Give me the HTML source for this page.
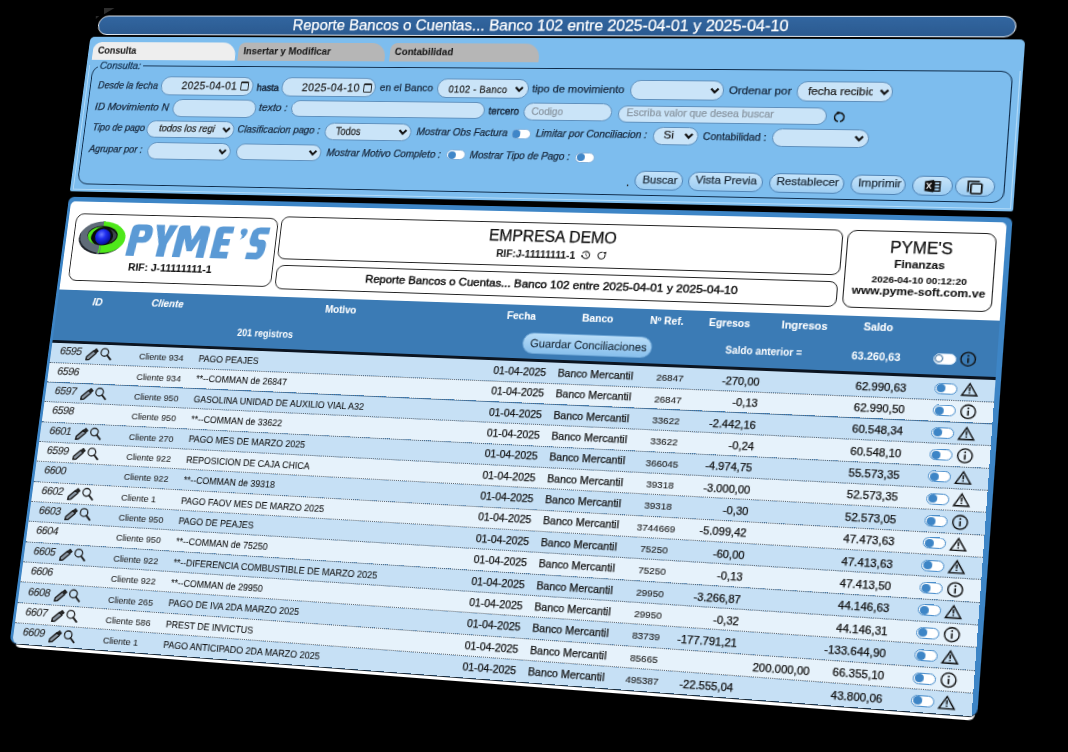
<!DOCTYPE html>
<html><head><meta charset="utf-8"><style>
html,body{margin:0;padding:0;background:#000;width:1068px;height:752px;overflow:hidden}
#page{position:absolute;left:0;top:0;width:1000px;height:720px;transform-origin:0 0;transform:matrix3d(0.8627905428,-0.001325382575,0,-0.0001042445195,-0.1226980846,0.8783294804,0,-5.875354911e-05,0,0,1,0,77.2073393,4.990854457,0,1)}
#f{position:absolute;left:20px;top:215px}
.t{position:absolute;white-space:nowrap;font-family:"Liberation Sans",sans-serif;color:#111;-webkit-text-stroke:0.25px currentColor}
.r{position:absolute;box-sizing:border-box}
svg{position:absolute;overflow:visible}
</style></head><body><svg style="position:absolute;left:0;top:0" width="1068" height="60"><path d="M104 8 L114.5 8 L104 14.3 Z" fill="#2e2e2e"/><path d="M95.8 15.9 L99.3 15.9 L95.8 19 Z" fill="#2a2a2a"/></svg><div id="page"><div id="f">
<div class="r" style="left:7.00px;top:-202.80px;width:944.00px;height:21.70px;border:1.7px solid #eef3f8;border-radius:11px;background:linear-gradient(#3266a0,#2b5a90)"></div>
<div class="t" style="top:-202.17px;line-height:19.15px;font-size:15.96px;left:223.90px;color:#fff;">Reporte Bancos o Cuentas... Banco 102 entre 2025-04-01 y 2025-04-10</div>
<div class="r" style="left:0.00px;top:-179.00px;width:960.00px;height:173.30px;background:#7dbdee;border-radius:5px 5px 2px 2px"></div>
<div class="r" style="left:2.50px;top:-147.00px;width:955.00px;height:138.70px;border-bottom:1.5px solid #b3dbf8;border-left:1.3px solid #b3dbf8;border-right:1.3px solid #b3dbf8"></div>
<div class="r" style="left:5.00px;top:-173.30px;width:159.50px;height:19.80px;background:#eeeeee;border-radius:9px 15px 0 0"></div>
<div class="r" style="left:168.00px;top:-173.30px;width:159.00px;height:19.80px;background:#b6b6b6;border-radius:7px 15px 0 0"></div>
<div class="r" style="left:332.00px;top:-173.30px;width:156.00px;height:19.80px;background:#b6b6b6;border-radius:7px 15px 0 0"></div>
<div class="t" style="top:-168.92px;line-height:12.23px;font-size:10.19px;left:10.70px;color:#1a1a1a;font-weight:bold;-webkit-text-stroke:0.08px currentColor">Consulta</div>
<div class="t" style="top:-169.39px;line-height:12.38px;font-size:10.32px;left:173.40px;color:#1a1a1a;font-weight:bold;-webkit-text-stroke:0.08px currentColor">Insertar y Modificar</div>
<div class="t" style="top:-169.50px;line-height:12.21px;font-size:10.17px;left:337.10px;color:#1a1a1a;font-weight:bold;-webkit-text-stroke:0.08px currentColor">Contabilidad</div>
<div class="r" style="left:7.00px;top:-147.50px;width:943.50px;height:133.50px;border:1.2px solid #0e2a48;border-radius:11px"></div>
<div class="r" style="left:13.00px;top:-150.00px;width:51.00px;height:6.00px;background:#7dbdee"></div>
<div class="t" style="top:-153.17px;line-height:13.15px;font-size:10.96px;left:15.20px;color:#12304f;font-style:italic">Consulta:</div>
<div class="t" style="top:-130.07px;line-height:12.14px;font-size:10.12px;left:16.10px;color:#16263a;font-style:italic">Desde la fecha</div>
<div class="r" style="left:87.20px;top:-134.60px;width:101.80px;height:20.30px;background:#cae4f8;border:1px solid #5f90bd;border-radius:10px"></div>
<div class="t" style="top:-131.81px;line-height:14.43px;font-size:12.02px;left:109.70px;color:#222;letter-spacing:0.04em;transform:scaleX(0.9259);transform-origin:0 50%">2025-04-01</div>
<div class="r" style="left:192.70px;top:-192.00px;width:24.00px;height:0.00px;"></div>
<div class="t" style="top:-129.24px;line-height:12.48px;font-size:10.40px;left:192.70px;color:#16263a;-webkit-text-stroke:0.5px #16263a;transform:scaleX(0.9434);transform-origin:0 50%">hasta</div>
<div class="r" style="left:220.10px;top:-135.00px;width:101.10px;height:21.10px;background:#cae4f8;border:1px solid #5f90bd;border-radius:10px"></div>
<div class="t" style="top:-131.12px;line-height:14.64px;font-size:12.20px;left:242.10px;color:#222;letter-spacing:0.04em;transform:scaleX(0.9259);transform-origin:0 50%">2025-04-10</div>
<div class="t" style="top:-130.66px;line-height:12.72px;font-size:10.60px;left:325.60px;color:#16263a;">en el Banco</div>
<div class="r" style="left:385.50px;top:-135.40px;width:95.60px;height:21.60px;background:#cae4f8;border:1px solid #5f90bd;border-radius:10px"></div>
<div class="t" style="top:-130.41px;line-height:12.81px;font-size:10.67px;left:397.70px;color:#222;letter-spacing:0.03em;transform:scaleX(0.9091);transform-origin:0 50%">0102 - Banco</div>
<div class="t" style="top:-131.02px;line-height:13.44px;font-size:11.20px;left:484.40px;color:#16263a;">tipo de movimiento</div>
<div class="r" style="left:584.30px;top:-135.00px;width:92.70px;height:21.00px;background:#cae4f8;border:1px solid #5f90bd;border-radius:10px"></div>
<div class="t" style="top:-131.18px;line-height:13.55px;font-size:11.30px;left:682.00px;color:#16263a;">Ordenar por</div>
<div class="r" style="left:747.80px;top:-135.00px;width:92.30px;height:21.00px;background:#cae4f8;border:1px solid #5f90bd;border-radius:10px"></div>
<div class="r" style="left:755.00px;top:-134.00px;width:65.50px;height:20.00px;overflow:hidden"><div class="t" style="left:3.9px;top:3.4px;font-size:11.3px;line-height:13px;color:#222">fecha recibida</div></div>
<div class="t" style="top:-107.25px;line-height:13.49px;font-size:11.24px;left:15.80px;color:#16263a;font-style:italic">ID Movimiento N</div>
<div class="r" style="left:102.90px;top:-109.70px;width:92.30px;height:19.20px;background:#cae4f8;border:1px solid #5f90bd;border-radius:10px"></div>
<div class="t" style="top:-108.00px;line-height:13.61px;font-size:11.34px;left:198.10px;color:#16263a;font-style:italic">texto :</div>
<div class="r" style="left:232.90px;top:-109.80px;width:205.20px;height:17.80px;background:#cae4f8;border:1px solid #5f90bd;border-radius:10px"></div>
<div class="t" style="top:-107.48px;line-height:13.56px;font-size:11.30px;left:441.90px;color:#16263a;-webkit-text-stroke:0.45px #16263a;transform:scaleX(0.8929);transform-origin:0 50%">tercero</div>
<div class="r" style="left:478.40px;top:-110.00px;width:89.90px;height:19.00px;background:#cae4f8;border:1px solid #5f90bd;border-radius:10px"></div>
<div class="t" style="top:-105.88px;line-height:12.16px;font-size:10.13px;left:486.30px;color:#8a97a3;">Codigo</div>
<div class="r" style="left:574.20px;top:-108.40px;width:205.20px;height:18.30px;background:#cae4f8;border:1px solid #5f90bd;border-radius:10px"></div>
<div class="t" style="top:-106.12px;line-height:12.45px;font-size:10.37px;left:582.60px;color:#8a97a3;">Escriba valor que desea buscar</div>
<div class="t" style="top:-82.58px;line-height:12.15px;font-size:10.12px;left:16.20px;color:#16263a;font-style:italic">Tipo de pago</div>
<div class="r" style="left:77.40px;top:-85.70px;width:96.50px;height:18.40px;background:#cae4f8;border:1px solid #5f90bd;border-radius:10px"></div>
<div class="t" style="top:-82.52px;line-height:12.43px;font-size:10.36px;left:90.90px;color:#222;font-style:italic">todos los regi</div>
<div class="t" style="top:-83.37px;line-height:12.34px;font-size:10.29px;left:177.60px;color:#16263a;font-style:italic">Clasificacion pago :</div>
<div class="r" style="left:272.30px;top:-86.50px;width:91.70px;height:19.00px;background:#cae4f8;border:1px solid #5f90bd;border-radius:10px"></div>
<div class="t" style="top:-83.89px;line-height:14.19px;font-size:11.83px;left:283.50px;color:#222;transform:scaleX(0.8333);transform-origin:0 50%">Todos</div>
<div class="t" style="top:-82.88px;line-height:12.35px;font-size:10.30px;left:369.50px;color:#16263a;font-style:italic">Mostrar Obs Factura</div>
<div class="t" style="top:-83.06px;line-height:12.31px;font-size:10.26px;left:492.90px;color:#16263a;font-style:italic">Limitar por Conciliacion :</div>
<div class="r" style="left:611.10px;top:-86.00px;width:44.50px;height:18.50px;background:#cae4f8;border:1px solid #5f90bd;border-radius:10px"></div>
<div class="t" style="top:-83.70px;line-height:13.80px;font-size:11.50px;left:621.50px;color:#222;">Si</div>
<div class="t" style="top:-82.48px;line-height:12.17px;font-size:10.14px;left:660.60px;color:#16263a;">Contabilidad :</div>
<div class="r" style="left:728.00px;top:-86.00px;width:92.90px;height:18.50px;background:#cae4f8;border:1px solid #5f90bd;border-radius:10px"></div>
<div class="t" style="top:-59.27px;line-height:12.34px;font-size:10.28px;left:15.40px;color:#16263a;font-style:italic">Agrupar por :</div>
<div class="r" style="left:81.20px;top:-62.00px;width:92.10px;height:18.50px;background:#cae4f8;border:1px solid #5f90bd;border-radius:10px"></div>
<div class="r" style="left:179.40px;top:-62.50px;width:91.80px;height:18.50px;background:#cae4f8;border:1px solid #5f90bd;border-radius:10px"></div>
<div class="t" style="top:-59.17px;line-height:12.35px;font-size:10.29px;left:276.80px;color:#16263a;font-style:italic">Mostrar Motivo Completo :</div>
<div class="t" style="top:-58.75px;line-height:12.10px;font-size:10.09px;left:427.50px;color:#16263a;font-style:italic">Mostrar Tipo de Pago :</div>
<div class="r" style="left:467.60px;top:-82.00px;width:20.00px;height:11.00px;background:#fff;border:1px solid #7fb0dc;border-radius:6px"></div>
<div class="r" style="left:469.20px;top:-80.60px;width:8.20px;height:8.20px;background:#3f86c8;border-radius:50%"></div>
<div class="r" style="left:403.30px;top:-58.60px;width:20.00px;height:11.00px;background:#fff;border:1px solid #7fb0dc;border-radius:6px"></div>
<div class="r" style="left:404.90px;top:-57.20px;width:8.20px;height:8.20px;background:#3f86c8;border-radius:50%"></div>
<div class="r" style="left:535.10px;top:-58.30px;width:20.00px;height:11.00px;background:#fff;border:1px solid #7fb0dc;border-radius:6px"></div>
<div class="r" style="left:536.70px;top:-56.90px;width:8.20px;height:8.20px;background:#3f86c8;border-radius:50%"></div>
<svg style="left:0.00px;top:0.00px" width="1" height="1"><path d="M467.60 -126.28 L471.20 -122.32 L474.80 -126.28" fill="none" stroke="#111" stroke-width="2.1"/></svg>
<svg style="left:0.00px;top:0.00px" width="1" height="1"><path d="M664.40 -126.48 L668.00 -122.52 L671.60 -126.48" fill="none" stroke="#111" stroke-width="2.1"/></svg>
<svg style="left:0.00px;top:0.00px" width="1" height="1"><path d="M828.40 -126.48 L832.00 -122.52 L835.60 -126.48" fill="none" stroke="#111" stroke-width="2.1"/></svg>
<svg style="left:0.00px;top:0.00px" width="1" height="1"><path d="M161.70 -78.78 L165.30 -74.82 L168.90 -78.78" fill="none" stroke="#111" stroke-width="2.1"/></svg>
<svg style="left:0.00px;top:0.00px" width="1" height="1"><path d="M351.40 -78.98 L355.00 -75.02 L358.60 -78.98" fill="none" stroke="#111" stroke-width="2.1"/></svg>
<svg style="left:0.00px;top:0.00px" width="1" height="1"><path d="M642.90 -78.98 L646.50 -75.02 L650.10 -78.98" fill="none" stroke="#111" stroke-width="2.1"/></svg>
<svg style="left:0.00px;top:0.00px" width="1" height="1"><path d="M807.90 -78.78 L811.50 -74.82 L815.10 -78.78" fill="none" stroke="#111" stroke-width="2.1"/></svg>
<svg style="left:0.00px;top:0.00px" width="1" height="1"><path d="M160.40 -54.78 L164.00 -50.82 L167.60 -54.78" fill="none" stroke="#111" stroke-width="2.1"/></svg>
<svg style="left:0.00px;top:0.00px" width="1" height="1"><path d="M258.40 -55.18 L262.00 -51.22 L265.60 -55.18" fill="none" stroke="#111" stroke-width="2.1"/></svg>
<div class="r" style="left:174.70px;top:-129.80px;width:9.20px;height:10.00px;border:1.4px solid #222;border-top-width:2.6px;border-radius:1.5px"></div>
<div class="r" style="left:307.70px;top:-129.10px;width:9.20px;height:10.00px;border:1.4px solid #222;border-top-width:2.6px;border-radius:1.5px"></div>
<svg style="left:0;top:0" width="1" height="1"><path d="M790.1 -93.6 A4.6 4.6 0 1 1 791.9 -93.6" fill="none" stroke="#111" stroke-width="1.45"/><circle cx="789.5" cy="-102.6" r="1.45" fill="#111"/></svg>
<div class="t" style="top:-34.10px;line-height:13.20px;font-size:11.00px;left:589.00px;color:#222;">.</div>
<div class="r" style="left:597.10px;top:-40.30px;width:48.20px;height:20.30px;background:linear-gradient(#c6e4fa,#9dcdf2);border:1px solid #5084b6;border-radius:10px"></div>
<div class="t" style="top:-37.25px;line-height:13.30px;font-size:11.08px;left:604.90px;color:#1d2c3a;">Buscar</div>
<div class="r" style="left:650.40px;top:-40.30px;width:72.60px;height:20.30px;background:linear-gradient(#c6e4fa,#9dcdf2);border:1px solid #5084b6;border-radius:10px"></div>
<div class="t" style="top:-37.56px;line-height:13.52px;font-size:11.26px;left:657.20px;color:#1d2c3a;">Vista Previa</div>
<div class="r" style="left:728.80px;top:-40.30px;width:72.70px;height:20.30px;background:linear-gradient(#c6e4fa,#9dcdf2);border:1px solid #5084b6;border-radius:10px"></div>
<div class="t" style="top:-37.73px;line-height:13.45px;font-size:11.21px;left:736.00px;color:#1d2c3a;">Restablecer</div>
<div class="r" style="left:806.60px;top:-40.30px;width:52.90px;height:20.30px;background:linear-gradient(#c6e4fa,#9dcdf2);border:1px solid #5084b6;border-radius:10px"></div>
<div class="t" style="top:-38.02px;line-height:13.63px;font-size:11.36px;left:813.90px;color:#1d2c3a;">Imprimir</div>
<div class="r" style="left:864.60px;top:-40.30px;width:38.40px;height:20.30px;background:linear-gradient(#c6e4fa,#9dcdf2);border:1px solid #5084b6;border-radius:10px"></div>
<div class="r" style="left:904.70px;top:-40.30px;width:37.30px;height:20.30px;background:linear-gradient(#c6e4fa,#9dcdf2);border:1px solid #5084b6;border-radius:10px"></div>
<svg style="left:0;top:0" width="1" height="1">
<path d="M876.8 -34.6 L885.2 -36 L885.2 -23.4 L876.8 -24.8 Z" fill="#111"/>
<path d="M878.6 -33 L882.8 -27 M882.8 -33 L878.6 -27" stroke="#fff" stroke-width="1.2"/>
<rect x="885.6" y="-34.2" width="5.4" height="9.4" fill="none" stroke="#111" stroke-width="1.3"/>
<path d="M885.6 -31.1 H891 M885.6 -28 H891" stroke="#111" stroke-width="1.1"/>
<path d="M917.2 -24.5 V-35.2 H927.6" fill="none" stroke="#111" stroke-width="1.5"/>
<rect x="919.8" y="-32.8" width="10" height="9.8" fill="#c4e2f7" stroke="#111" stroke-width="1.6" rx="1"/>
</svg>
<div class="r" style="left:6.00px;top:478.00px;width:952.00px;height:6.20px;background:#fff;border-radius:0 0 8px 8px"></div>
<div class="r" style="left:0.00px;top:0.00px;width:960.00px;height:481.30px;background:#3d85c6;border-radius:6px 6px 8px 8px;border-bottom:1.3px solid #1b2630"></div>
<div class="r" style="left:3.00px;top:4.80px;width:952.00px;height:97.20px;background:#fff;border-radius:5px 5px 0 0"></div>
<div class="r" style="left:11.00px;top:18.00px;width:222.50px;height:74.00px;border:1px solid #222;border-radius:9px;background:#fff"></div>
<svg style="left:0;top:0" width="1" height="1">
<defs><radialGradient id="ball" cx="0.4" cy="0.35" r="0.7"><stop offset="0" stop-color="#6f7dff"/><stop offset="0.4" stop-color="#1f2ef0"/><stop offset="1" stop-color="#000890"/></radialGradient></defs>
<ellipse cx="42.2" cy="45.2" rx="25" ry="17" fill="#1d2229"/>
<clipPath id="lh"><rect x="0" y="0" width="43" height="80"/></clipPath>
<clipPath id="rh"><rect x="43" y="0" width="60" height="80"/></clipPath>
<ellipse cx="43.8" cy="43.6" rx="25.3" ry="17.2" fill="#5f6b78" clip-path="url(#lh)"/>
<path d="M42.5 26 L44.5 26 L41.5 62 L39 62 Z" fill="#5f6b78"/>
<ellipse cx="43.8" cy="43.6" rx="25.3" ry="17.2" fill="#4fe81a" clip-path="url(#rh)"/>
<path d="M43.5 26.3 L45 26.3 L42 61 L40.5 61 Z" fill="#4fe81a"/>
<ellipse cx="43.3" cy="41.8" rx="16.8" ry="10.6" fill="#0a0d0a"/>
<path d="M44 32 C34 32 27 37 27 42 C27 47 31 50 36 51.5 C31 48 30 45 31 42 C32 37 37 33 44 32 Z" fill="#4fe81a"/>
<path d="M50 34 C56 36 59 39 59 42 C59 45 56 48 51 50 C54 47 55 45 55 42 C55 39 53 36 50 34 Z" fill="#3d464d"/>
<circle cx="43.8" cy="43.2" r="8.6" fill="url(#ball)"/>
</svg>
<svg style="left:0;top:0" width="1" height="1"><g fill="#5b9ad5" fill-rule="evenodd" transform="translate(71.3 28.6) scale(0.345) translate(0 50) skewX(-7.4) translate(0 -50)">
<path d="M6.7 100 V18 Q6.7 0 24.7 0 H50.7 Q75.7 0 75.7 28 Q75.7 58 50.7 58 H33.7 V100 Z M33.7 19 V39 H46.7 Q51.7 39 51.7 29 Q51.7 19 46.7 19 Z"/>
<path d="M81.8 0 H108.8 L116.8 34 L124.8 0 H151.8 L129.8 60 V100 H103.8 V60 Z"/>
<path d="M156 100 V15 Q156 0 171 0 H189 L206 45 L223 0 H241 Q256 0 256 15 V100 H231 V40 L214 80 H198 L181 40 V100 Z"/>
<path d="M275.9 100 V18 Q275.9 0 293.9 0 H329.9 V21 H301.9 V39 H325.9 V59 H301.9 V79 H329.9 V100 Z"/>
<path d="M353 13 Q353 5 363 5 Q374 5 374 15 Q374 30 356 40 Q362 30 360 26 Q353 24 353 13 Z"/>
<path d="M442.3 0 V21 H414.3 Q411.3 21 411.3 25 Q411.3 38 417.3 38 H427.3 Q442.3 40 442.3 62 Q442.3 100 417.3 100 H387.3 V79 H415.3 Q418.3 79 418.3 75 Q418.3 60 412.3 60 H404.3 Q387.3 58 387.3 35 Q387.3 0 412.3 0 Z"/>
</g></svg>
<div class="t" style="top:69.16px;line-height:13.69px;font-size:11.41px;left:76.20px;color:#111;font-weight:bold;-webkit-text-stroke:0.08px currentColor">RIF: J-11111111-1</div>
<div class="r" style="left:236.50px;top:16.30px;width:567.00px;height:45.70px;border:1px solid #222;border-radius:8px"></div>
<div class="r" style="left:237.70px;top:67.60px;width:565.30px;height:26.40px;border:1px solid #222;border-radius:8px"></div>
<div class="r" style="left:808.20px;top:16.00px;width:139.00px;height:78.10px;border:1px solid #222;border-radius:9px"></div>
<div class="t" style="top:21.46px;line-height:19.08px;font-size:15.90px;left:456.00px;color:#111;">EMPRESA DEMO</div>
<div class="t" style="top:44.33px;line-height:12.35px;font-size:10.29px;left:465.20px;color:#222;font-weight:bold;-webkit-text-stroke:0.08px currentColor">RIF:J-11111111-1</div>
<svg style="left:0;top:0" width="1" height="1"><path d="M552.45 47.04 A3.70 3.70 0 1 1 552.23 49.56" fill="none" stroke="#222" stroke-width="1.05"/><circle cx="552.03" cy="49.76" r="1.05" fill="#222"/><path d="M555.8 46.5 V48.8 L557.3 50" fill="none" stroke="#444" stroke-width="0.9"/><path d="M574.78 47.79 A3.50 3.50 0 1 1 572.31 45.32" fill="none" stroke="#222" stroke-width="1.1"/><path d="M572.86 45.25 L576.06 44.65 L575.26 48.15 Z" fill="#222"/></svg>
<div class="t" style="top:73.47px;line-height:14.05px;font-size:11.71px;left:333.10px;color:#111;-webkit-text-stroke:0.45px #111">Reporte Bancos o Cuentas... Banco 102 entre 2025-04-01 y 2025-04-10</div>
<div class="t" style="top:23.49px;line-height:19.01px;font-size:15.84px;left:848.90px;color:#111;">PYME'S</div>
<div class="t" style="top:43.37px;line-height:13.27px;font-size:11.05px;left:853.90px;color:#111;font-weight:bold;-webkit-text-stroke:0.08px currentColor">Finanzas</div>
<div class="t" style="top:59.35px;line-height:11.30px;font-size:9.42px;left:834.00px;color:#111;font-weight:bold;-webkit-text-stroke:0.08px currentColor">2026-04-10 00:12:20</div>
<div class="t" style="top:70.08px;line-height:13.43px;font-size:11.19px;left:816.20px;color:#111;font-weight:bold;-webkit-text-stroke:0.08px currentColor">www.pyme-soft.com.ve</div>
<div class="r" style="left:3.00px;top:102.00px;width:952.00px;height:55.00px;background:#3b7bb5"></div>
<div class="r" style="left:3.00px;top:156.80px;width:952.00px;height:3.00px;background:#0b1420"></div>
<div class="t" style="top:107.64px;line-height:13.32px;font-size:11.10px;left:41.90px;color:#fff;font-weight:bold;font-style:italic;-webkit-text-stroke:0.08px currentColor">ID</div>
<div class="t" style="top:107.48px;line-height:12.63px;font-size:10.53px;left:107.20px;color:#fff;font-weight:bold;font-style:italic;-webkit-text-stroke:0.08px currentColor">Cliente</div>
<div class="t" style="top:107.66px;line-height:12.29px;font-size:10.24px;left:294.40px;color:#fff;font-weight:bold;-webkit-text-stroke:0.08px currentColor">Motivo</div>
<div class="t" style="top:107.74px;line-height:12.12px;font-size:10.10px;left:482.80px;color:#fff;font-weight:bold;-webkit-text-stroke:0.08px currentColor">Fecha</div>
<div class="t" style="top:107.80px;line-height:12.21px;font-size:10.18px;left:558.20px;color:#fff;font-weight:bold;-webkit-text-stroke:0.08px currentColor">Banco</div>
<div class="t" style="top:108.34px;line-height:12.13px;font-size:10.11px;left:625.50px;color:#fff;font-weight:bold;-webkit-text-stroke:0.08px currentColor">Nº Ref.</div>
<div class="t" style="top:108.30px;line-height:12.01px;font-size:10.01px;left:683.00px;color:#fff;font-weight:bold;-webkit-text-stroke:0.08px currentColor">Egresos</div>
<div class="t" style="top:108.24px;line-height:12.52px;font-size:10.44px;left:752.80px;color:#fff;font-weight:bold;-webkit-text-stroke:0.08px currentColor">Ingresos</div>
<div class="t" style="top:107.26px;line-height:12.08px;font-size:10.06px;left:830.20px;color:#fff;font-weight:bold;-webkit-text-stroke:0.08px currentColor">Saldo</div>
<div class="t" style="top:134.58px;line-height:13.23px;font-size:11.03px;left:204.30px;color:#fff;font-weight:bold;transform:scaleX(0.8696);transform-origin:0 50%;-webkit-text-stroke:0.08px currentColor">201 registros</div>
<div class="r" style="left:500.90px;top:130.00px;width:129.50px;height:22.00px;background:linear-gradient(#b9ddf8,#88bfec);border:1px solid #6aa3d4;border-radius:11px"></div>
<div class="t" style="top:133.78px;line-height:14.04px;font-size:11.70px;left:508.90px;color:#1b2a38;-webkit-text-stroke:0.1px #1b2a38;transform:scaleX(0.9524);transform-origin:0 50%">Guardar Conciliaciones</div>
<div class="t" style="top:134.23px;line-height:13.34px;font-size:11.11px;left:701.30px;color:#fff;font-weight:bold;transform:scaleX(0.8696);transform-origin:0 50%;-webkit-text-stroke:0.08px currentColor">Saldo anterior =</div>
<div class="t" style="top:134.56px;line-height:13.28px;font-size:11.07px;left:820.50px;color:#fff;font-weight:bold;transform:scaleX(0.9259);transform-origin:0 50%;-webkit-text-stroke:0.08px currentColor">63.260,63</div>
<div class="r" style="left:896.50px;top:135.70px;width:21.00px;height:11.00px;background:#fff;border:1px solid #cfe3f5;border-radius:6px"></div>
<div class="r" style="left:898.20px;top:137.10px;width:8.20px;height:8.20px;background:#fff;border:1.2px solid #2f6699;border-radius:50%"></div>
<svg style="left:0;top:0" width="1" height="1"><circle cx="928.80" cy="140.70" r="6.60" fill="none" stroke="#111" stroke-width="1.3"/><rect x="928.05" y="139.50" width="1.5" height="5" fill="#111"/><circle cx="928.80" cy="137.30" r="0.9" fill="#111"/></svg>
<div class="r" style="left:3.00px;top:159.80px;width:952.00px;height:21.35px;background:#c6e0f5;"></div>
<div class="t" style="top:162.33px;line-height:13.80px;font-size:11.50px;left:12.60px;color:#2b2b2b;letter-spacing:-0.38px;-webkit-text-stroke:0.15px #2b2b2b;transform:skewX(-8deg)">6595</div>
<svg style="left:0;top:0" width="1" height="1"><g transform="translate(48.70 171.08) rotate(-44)"><path d="M-8.2 0 L-5.6 -2 H4.2 V2 H-5.6 Z" fill="#8a96a3" stroke="#1a1a1a" stroke-width="1.45" stroke-linejoin="round"/><path d="M-8.4 0 L-6.6 -1 V1 Z" fill="#222"/><rect x="4.6" y="-2.2" width="3.4" height="4.4" rx="0.6" fill="#222"/></g></svg>
<svg style="left:0;top:0" width="1" height="1"><circle cx="62.70" cy="168.18" r="4.1" fill="none" stroke="#222" stroke-width="1.35"/><path d="M65.60 171.18 L69.70 175.48" stroke="#222" stroke-width="2" stroke-linecap="round"/></svg>
<div class="t" style="top:165.32px;line-height:11.52px;font-size:9.60px;left:101.00px;color:#222;-webkit-text-stroke:0.05px #222">Cliente 934</div>
<div class="t" style="top:165.08px;line-height:12.00px;font-size:10.00px;left:166.00px;color:#111;-webkit-text-stroke:0.05px #111;transform:scaleX(0.93);transform-origin:0 50%">PAGO PEAJES</div>
<div class="t" style="top:165.04px;line-height:12.48px;font-size:10.40px;left:-98.70px;width:1200px;text-align:center;color:#111;">01-04-2025</div>
<div class="t" style="top:165.04px;line-height:12.48px;font-size:10.40px;left:-23.30px;width:1200px;text-align:center;color:#111;">Banco Mercantil</div>
<div class="t" style="top:165.28px;line-height:11.40px;font-size:9.50px;left:50.00px;width:1200px;text-align:center;color:#222;-webkit-text-stroke:0.12px #222">26847</div>
<div class="t" style="top:165.02px;line-height:12.72px;font-size:10.60px;left:-463.50px;width:1200px;text-align:right;color:#111;">-270,00</div>
<div class="t" style="top:164.72px;line-height:12.72px;font-size:10.60px;left:-325.80px;width:1200px;text-align:right;color:#111;">62.990,63</div>
<div class="r" style="left:900.30px;top:164.98px;width:21.00px;height:11.00px;background:#fff;border:1px solid #4d90cc;border-radius:6px"></div>
<div class="r" style="left:902.10px;top:166.48px;width:8.00px;height:8.00px;background:#3d85c6;border-radius:50%"></div>
<svg style="left:0;top:0" width="1" height="1"><path d="M932.20 164.61 L939.10 176.00 L925.30 176.00 Z" fill="none" stroke="#111" stroke-width="1.35" stroke-linejoin="miter"/><rect x="931.50" y="167.88" width="1.4" height="4" fill="#111"/><rect x="931.50" y="172.88" width="1.4" height="1.3" fill="#111"/></svg>
<div class="r" style="left:3.00px;top:181.15px;width:952.00px;height:21.35px;background:#e6f2fb;"></div>
<div class="r" style="left:3.00px;top:180.55px;width:952.00px;height:1.20px;border-top:1.2px dotted #59636d"></div>
<div class="t" style="top:183.68px;line-height:13.80px;font-size:11.50px;left:12.60px;color:#2b2b2b;letter-spacing:-0.38px;-webkit-text-stroke:0.15px #2b2b2b;transform:skewX(-8deg)">6596</div>
<div class="t" style="top:186.67px;line-height:11.52px;font-size:9.60px;left:101.00px;color:#222;-webkit-text-stroke:0.05px #222">Cliente 934</div>
<div class="t" style="top:186.43px;line-height:12.00px;font-size:10.00px;left:166.00px;color:#111;-webkit-text-stroke:0.05px #111;transform:scaleX(0.93);transform-origin:0 50%">**--COMMAN de 26847</div>
<div class="t" style="top:186.39px;line-height:12.48px;font-size:10.40px;left:-98.70px;width:1200px;text-align:center;color:#111;">01-04-2025</div>
<div class="t" style="top:186.39px;line-height:12.48px;font-size:10.40px;left:-23.30px;width:1200px;text-align:center;color:#111;">Banco Mercantil</div>
<div class="t" style="top:186.63px;line-height:11.40px;font-size:9.50px;left:50.00px;width:1200px;text-align:center;color:#222;-webkit-text-stroke:0.12px #222">26847</div>
<div class="t" style="top:186.37px;line-height:12.72px;font-size:10.60px;left:-463.50px;width:1200px;text-align:right;color:#111;">-0,13</div>
<div class="t" style="top:186.06px;line-height:12.72px;font-size:10.60px;left:-325.80px;width:1200px;text-align:right;color:#111;">62.990,50</div>
<div class="r" style="left:900.30px;top:186.33px;width:21.00px;height:11.00px;background:#fff;border:1px solid #4d90cc;border-radius:6px"></div>
<div class="r" style="left:902.10px;top:187.83px;width:8.00px;height:8.00px;background:#3d85c6;border-radius:50%"></div>
<svg style="left:0;top:0" width="1" height="1"><circle cx="932.30" cy="191.83" r="6.60" fill="none" stroke="#111" stroke-width="1.3"/><rect x="931.55" y="190.63" width="1.5" height="5" fill="#111"/><circle cx="932.30" cy="188.43" r="0.9" fill="#111"/></svg>
<div class="r" style="left:3.00px;top:202.50px;width:952.00px;height:21.35px;background:#c6e0f5;"></div>
<div class="r" style="left:3.00px;top:201.90px;width:952.00px;height:1.20px;border-top:1.2px dotted #59636d"></div>
<div class="t" style="top:205.03px;line-height:13.80px;font-size:11.50px;left:12.60px;color:#2b2b2b;letter-spacing:-0.38px;-webkit-text-stroke:0.15px #2b2b2b;transform:skewX(-8deg)">6597</div>
<svg style="left:0;top:0" width="1" height="1"><g transform="translate(48.70 213.78) rotate(-44)"><path d="M-8.2 0 L-5.6 -2 H4.2 V2 H-5.6 Z" fill="#8a96a3" stroke="#1a1a1a" stroke-width="1.45" stroke-linejoin="round"/><path d="M-8.4 0 L-6.6 -1 V1 Z" fill="#222"/><rect x="4.6" y="-2.2" width="3.4" height="4.4" rx="0.6" fill="#222"/></g></svg>
<svg style="left:0;top:0" width="1" height="1"><circle cx="62.70" cy="210.88" r="4.1" fill="none" stroke="#222" stroke-width="1.35"/><path d="M65.60 213.88 L69.70 218.18" stroke="#222" stroke-width="2" stroke-linecap="round"/></svg>
<div class="t" style="top:208.02px;line-height:11.52px;font-size:9.60px;left:101.00px;color:#222;-webkit-text-stroke:0.05px #222">Cliente 950</div>
<div class="t" style="top:207.78px;line-height:12.00px;font-size:10.00px;left:166.00px;color:#111;-webkit-text-stroke:0.05px #111;transform:scaleX(0.93);transform-origin:0 50%">GASOLINA UNIDAD DE AUXILIO VIAL A32</div>
<div class="t" style="top:207.74px;line-height:12.48px;font-size:10.40px;left:-98.70px;width:1200px;text-align:center;color:#111;">01-04-2025</div>
<div class="t" style="top:207.74px;line-height:12.48px;font-size:10.40px;left:-23.30px;width:1200px;text-align:center;color:#111;">Banco Mercantil</div>
<div class="t" style="top:207.98px;line-height:11.40px;font-size:9.50px;left:50.00px;width:1200px;text-align:center;color:#222;-webkit-text-stroke:0.12px #222">33622</div>
<div class="t" style="top:207.72px;line-height:12.72px;font-size:10.60px;left:-463.50px;width:1200px;text-align:right;color:#111;">-2.442,16</div>
<div class="t" style="top:207.41px;line-height:12.72px;font-size:10.60px;left:-325.80px;width:1200px;text-align:right;color:#111;">60.548,34</div>
<div class="r" style="left:900.30px;top:207.68px;width:21.00px;height:11.00px;background:#fff;border:1px solid #4d90cc;border-radius:6px"></div>
<div class="r" style="left:902.10px;top:209.18px;width:8.00px;height:8.00px;background:#3d85c6;border-radius:50%"></div>
<svg style="left:0;top:0" width="1" height="1"><path d="M932.20 207.31 L939.10 218.70 L925.30 218.70 Z" fill="none" stroke="#111" stroke-width="1.35" stroke-linejoin="miter"/><rect x="931.50" y="210.58" width="1.4" height="4" fill="#111"/><rect x="931.50" y="215.58" width="1.4" height="1.3" fill="#111"/></svg>
<div class="r" style="left:3.00px;top:223.85px;width:952.00px;height:21.35px;background:#e6f2fb;"></div>
<div class="r" style="left:3.00px;top:223.25px;width:952.00px;height:1.20px;border-top:1.2px dotted #59636d"></div>
<div class="t" style="top:226.38px;line-height:13.80px;font-size:11.50px;left:12.60px;color:#2b2b2b;letter-spacing:-0.38px;-webkit-text-stroke:0.15px #2b2b2b;transform:skewX(-8deg)">6598</div>
<div class="t" style="top:229.37px;line-height:11.52px;font-size:9.60px;left:101.00px;color:#222;-webkit-text-stroke:0.05px #222">Cliente 950</div>
<div class="t" style="top:229.13px;line-height:12.00px;font-size:10.00px;left:166.00px;color:#111;-webkit-text-stroke:0.05px #111;transform:scaleX(0.93);transform-origin:0 50%">**--COMMAN de 33622</div>
<div class="t" style="top:229.09px;line-height:12.48px;font-size:10.40px;left:-98.70px;width:1200px;text-align:center;color:#111;">01-04-2025</div>
<div class="t" style="top:229.09px;line-height:12.48px;font-size:10.40px;left:-23.30px;width:1200px;text-align:center;color:#111;">Banco Mercantil</div>
<div class="t" style="top:229.33px;line-height:11.40px;font-size:9.50px;left:50.00px;width:1200px;text-align:center;color:#222;-webkit-text-stroke:0.12px #222">33622</div>
<div class="t" style="top:229.07px;line-height:12.72px;font-size:10.60px;left:-463.50px;width:1200px;text-align:right;color:#111;">-0,24</div>
<div class="t" style="top:228.77px;line-height:12.72px;font-size:10.60px;left:-325.80px;width:1200px;text-align:right;color:#111;">60.548,10</div>
<div class="r" style="left:900.30px;top:229.03px;width:21.00px;height:11.00px;background:#fff;border:1px solid #4d90cc;border-radius:6px"></div>
<div class="r" style="left:902.10px;top:230.53px;width:8.00px;height:8.00px;background:#3d85c6;border-radius:50%"></div>
<svg style="left:0;top:0" width="1" height="1"><circle cx="932.30" cy="234.53" r="6.60" fill="none" stroke="#111" stroke-width="1.3"/><rect x="931.55" y="233.33" width="1.5" height="5" fill="#111"/><circle cx="932.30" cy="231.13" r="0.9" fill="#111"/></svg>
<div class="r" style="left:3.00px;top:245.20px;width:952.00px;height:21.35px;background:#c6e0f5;"></div>
<div class="r" style="left:3.00px;top:244.60px;width:952.00px;height:1.20px;border-top:1.2px dotted #59636d"></div>
<div class="t" style="top:247.73px;line-height:13.80px;font-size:11.50px;left:12.60px;color:#2b2b2b;letter-spacing:-0.38px;-webkit-text-stroke:0.15px #2b2b2b;transform:skewX(-8deg)">6601</div>
<svg style="left:0;top:0" width="1" height="1"><g transform="translate(48.70 256.48) rotate(-44)"><path d="M-8.2 0 L-5.6 -2 H4.2 V2 H-5.6 Z" fill="#8a96a3" stroke="#1a1a1a" stroke-width="1.45" stroke-linejoin="round"/><path d="M-8.4 0 L-6.6 -1 V1 Z" fill="#222"/><rect x="4.6" y="-2.2" width="3.4" height="4.4" rx="0.6" fill="#222"/></g></svg>
<svg style="left:0;top:0" width="1" height="1"><circle cx="62.70" cy="253.58" r="4.1" fill="none" stroke="#222" stroke-width="1.35"/><path d="M65.60 256.58 L69.70 260.88" stroke="#222" stroke-width="2" stroke-linecap="round"/></svg>
<div class="t" style="top:250.72px;line-height:11.52px;font-size:9.60px;left:101.00px;color:#222;-webkit-text-stroke:0.05px #222">Cliente 270</div>
<div class="t" style="top:250.48px;line-height:12.00px;font-size:10.00px;left:166.00px;color:#111;-webkit-text-stroke:0.05px #111;transform:scaleX(0.93);transform-origin:0 50%">PAGO MES DE MARZO 2025</div>
<div class="t" style="top:250.44px;line-height:12.48px;font-size:10.40px;left:-98.70px;width:1200px;text-align:center;color:#111;">01-04-2025</div>
<div class="t" style="top:250.44px;line-height:12.48px;font-size:10.40px;left:-23.30px;width:1200px;text-align:center;color:#111;">Banco Mercantil</div>
<div class="t" style="top:250.68px;line-height:11.40px;font-size:9.50px;left:50.00px;width:1200px;text-align:center;color:#222;-webkit-text-stroke:0.12px #222">366045</div>
<div class="t" style="top:250.42px;line-height:12.72px;font-size:10.60px;left:-463.50px;width:1200px;text-align:right;color:#111;">-4.974,75</div>
<div class="t" style="top:250.12px;line-height:12.72px;font-size:10.60px;left:-325.80px;width:1200px;text-align:right;color:#111;">55.573,35</div>
<div class="r" style="left:900.30px;top:250.38px;width:21.00px;height:11.00px;background:#fff;border:1px solid #4d90cc;border-radius:6px"></div>
<div class="r" style="left:902.10px;top:251.88px;width:8.00px;height:8.00px;background:#3d85c6;border-radius:50%"></div>
<svg style="left:0;top:0" width="1" height="1"><path d="M932.20 250.01 L939.10 261.40 L925.30 261.40 Z" fill="none" stroke="#111" stroke-width="1.35" stroke-linejoin="miter"/><rect x="931.50" y="253.28" width="1.4" height="4" fill="#111"/><rect x="931.50" y="258.28" width="1.4" height="1.3" fill="#111"/></svg>
<div class="r" style="left:3.00px;top:266.55px;width:952.00px;height:21.35px;background:#e6f2fb;"></div>
<div class="r" style="left:3.00px;top:265.95px;width:952.00px;height:1.20px;border-top:1.2px dotted #59636d"></div>
<div class="t" style="top:269.08px;line-height:13.80px;font-size:11.50px;left:12.60px;color:#2b2b2b;letter-spacing:-0.38px;-webkit-text-stroke:0.15px #2b2b2b;transform:skewX(-8deg)">6599</div>
<svg style="left:0;top:0" width="1" height="1"><g transform="translate(48.70 277.83) rotate(-44)"><path d="M-8.2 0 L-5.6 -2 H4.2 V2 H-5.6 Z" fill="#8a96a3" stroke="#1a1a1a" stroke-width="1.45" stroke-linejoin="round"/><path d="M-8.4 0 L-6.6 -1 V1 Z" fill="#222"/><rect x="4.6" y="-2.2" width="3.4" height="4.4" rx="0.6" fill="#222"/></g></svg>
<svg style="left:0;top:0" width="1" height="1"><circle cx="62.70" cy="274.93" r="4.1" fill="none" stroke="#222" stroke-width="1.35"/><path d="M65.60 277.93 L69.70 282.23" stroke="#222" stroke-width="2" stroke-linecap="round"/></svg>
<div class="t" style="top:272.07px;line-height:11.52px;font-size:9.60px;left:101.00px;color:#222;-webkit-text-stroke:0.05px #222">Cliente 922</div>
<div class="t" style="top:271.83px;line-height:12.00px;font-size:10.00px;left:166.00px;color:#111;-webkit-text-stroke:0.05px #111;transform:scaleX(0.93);transform-origin:0 50%">REPOSICION DE CAJA CHICA</div>
<div class="t" style="top:271.79px;line-height:12.48px;font-size:10.40px;left:-98.70px;width:1200px;text-align:center;color:#111;">01-04-2025</div>
<div class="t" style="top:271.79px;line-height:12.48px;font-size:10.40px;left:-23.30px;width:1200px;text-align:center;color:#111;">Banco Mercantil</div>
<div class="t" style="top:272.03px;line-height:11.40px;font-size:9.50px;left:50.00px;width:1200px;text-align:center;color:#222;-webkit-text-stroke:0.12px #222">39318</div>
<div class="t" style="top:271.76px;line-height:12.72px;font-size:10.60px;left:-463.50px;width:1200px;text-align:right;color:#111;">-3.000,00</div>
<div class="t" style="top:271.47px;line-height:12.72px;font-size:10.60px;left:-325.80px;width:1200px;text-align:right;color:#111;">52.573,35</div>
<div class="r" style="left:900.30px;top:271.73px;width:21.00px;height:11.00px;background:#fff;border:1px solid #4d90cc;border-radius:6px"></div>
<div class="r" style="left:902.10px;top:273.23px;width:8.00px;height:8.00px;background:#3d85c6;border-radius:50%"></div>
<svg style="left:0;top:0" width="1" height="1"><path d="M932.20 271.36 L939.10 282.75 L925.30 282.75 Z" fill="none" stroke="#111" stroke-width="1.35" stroke-linejoin="miter"/><rect x="931.50" y="274.62" width="1.4" height="4" fill="#111"/><rect x="931.50" y="279.62" width="1.4" height="1.3" fill="#111"/></svg>
<div class="r" style="left:3.00px;top:287.90px;width:952.00px;height:21.35px;background:#c6e0f5;"></div>
<div class="r" style="left:3.00px;top:287.30px;width:952.00px;height:1.20px;border-top:1.2px dotted #59636d"></div>
<div class="t" style="top:290.43px;line-height:13.80px;font-size:11.50px;left:12.60px;color:#2b2b2b;letter-spacing:-0.38px;-webkit-text-stroke:0.15px #2b2b2b;transform:skewX(-8deg)">6600</div>
<div class="t" style="top:293.42px;line-height:11.52px;font-size:9.60px;left:101.00px;color:#222;-webkit-text-stroke:0.05px #222">Cliente 922</div>
<div class="t" style="top:293.18px;line-height:12.00px;font-size:10.00px;left:166.00px;color:#111;-webkit-text-stroke:0.05px #111;transform:scaleX(0.93);transform-origin:0 50%">**--COMMAN de 39318</div>
<div class="t" style="top:293.14px;line-height:12.48px;font-size:10.40px;left:-98.70px;width:1200px;text-align:center;color:#111;">01-04-2025</div>
<div class="t" style="top:293.14px;line-height:12.48px;font-size:10.40px;left:-23.30px;width:1200px;text-align:center;color:#111;">Banco Mercantil</div>
<div class="t" style="top:293.38px;line-height:11.40px;font-size:9.50px;left:50.00px;width:1200px;text-align:center;color:#222;-webkit-text-stroke:0.12px #222">39318</div>
<div class="t" style="top:293.12px;line-height:12.72px;font-size:10.60px;left:-463.50px;width:1200px;text-align:right;color:#111;">-0,30</div>
<div class="t" style="top:292.82px;line-height:12.72px;font-size:10.60px;left:-325.80px;width:1200px;text-align:right;color:#111;">52.573,05</div>
<div class="r" style="left:900.30px;top:293.08px;width:21.00px;height:11.00px;background:#fff;border:1px solid #4d90cc;border-radius:6px"></div>
<div class="r" style="left:902.10px;top:294.58px;width:8.00px;height:8.00px;background:#3d85c6;border-radius:50%"></div>
<svg style="left:0;top:0" width="1" height="1"><circle cx="932.30" cy="298.58" r="6.60" fill="none" stroke="#111" stroke-width="1.3"/><rect x="931.55" y="297.38" width="1.5" height="5" fill="#111"/><circle cx="932.30" cy="295.18" r="0.9" fill="#111"/></svg>
<div class="r" style="left:3.00px;top:309.25px;width:952.00px;height:21.35px;background:#e6f2fb;"></div>
<div class="r" style="left:3.00px;top:308.65px;width:952.00px;height:1.20px;border-top:1.2px dotted #59636d"></div>
<div class="t" style="top:311.78px;line-height:13.80px;font-size:11.50px;left:12.60px;color:#2b2b2b;letter-spacing:-0.38px;-webkit-text-stroke:0.15px #2b2b2b;transform:skewX(-8deg)">6602</div>
<svg style="left:0;top:0" width="1" height="1"><g transform="translate(48.70 320.53) rotate(-44)"><path d="M-8.2 0 L-5.6 -2 H4.2 V2 H-5.6 Z" fill="#8a96a3" stroke="#1a1a1a" stroke-width="1.45" stroke-linejoin="round"/><path d="M-8.4 0 L-6.6 -1 V1 Z" fill="#222"/><rect x="4.6" y="-2.2" width="3.4" height="4.4" rx="0.6" fill="#222"/></g></svg>
<svg style="left:0;top:0" width="1" height="1"><circle cx="62.70" cy="317.62" r="4.1" fill="none" stroke="#222" stroke-width="1.35"/><path d="M65.60 320.62 L69.70 324.93" stroke="#222" stroke-width="2" stroke-linecap="round"/></svg>
<div class="t" style="top:314.77px;line-height:11.52px;font-size:9.60px;left:101.00px;color:#222;-webkit-text-stroke:0.05px #222">Cliente 1</div>
<div class="t" style="top:314.53px;line-height:12.00px;font-size:10.00px;left:166.00px;color:#111;-webkit-text-stroke:0.05px #111;transform:scaleX(0.93);transform-origin:0 50%">PAGO FAOV MES DE MARZO 2025</div>
<div class="t" style="top:314.49px;line-height:12.48px;font-size:10.40px;left:-98.70px;width:1200px;text-align:center;color:#111;">01-04-2025</div>
<div class="t" style="top:314.49px;line-height:12.48px;font-size:10.40px;left:-23.30px;width:1200px;text-align:center;color:#111;">Banco Mercantil</div>
<div class="t" style="top:314.73px;line-height:11.40px;font-size:9.50px;left:50.00px;width:1200px;text-align:center;color:#222;-webkit-text-stroke:0.12px #222">3744669</div>
<div class="t" style="top:314.46px;line-height:12.72px;font-size:10.60px;left:-463.50px;width:1200px;text-align:right;color:#111;">-5.099,42</div>
<div class="t" style="top:314.17px;line-height:12.72px;font-size:10.60px;left:-325.80px;width:1200px;text-align:right;color:#111;">47.473,63</div>
<div class="r" style="left:900.30px;top:314.43px;width:21.00px;height:11.00px;background:#fff;border:1px solid #4d90cc;border-radius:6px"></div>
<div class="r" style="left:902.10px;top:315.93px;width:8.00px;height:8.00px;background:#3d85c6;border-radius:50%"></div>
<svg style="left:0;top:0" width="1" height="1"><path d="M932.20 314.06 L939.10 325.44 L925.30 325.44 Z" fill="none" stroke="#111" stroke-width="1.35" stroke-linejoin="miter"/><rect x="931.50" y="317.32" width="1.4" height="4" fill="#111"/><rect x="931.50" y="322.32" width="1.4" height="1.3" fill="#111"/></svg>
<div class="r" style="left:3.00px;top:330.60px;width:952.00px;height:21.35px;background:#c6e0f5;"></div>
<div class="r" style="left:3.00px;top:330.00px;width:952.00px;height:1.20px;border-top:1.2px dotted #59636d"></div>
<div class="t" style="top:333.13px;line-height:13.80px;font-size:11.50px;left:12.60px;color:#2b2b2b;letter-spacing:-0.38px;-webkit-text-stroke:0.15px #2b2b2b;transform:skewX(-8deg)">6603</div>
<svg style="left:0;top:0" width="1" height="1"><g transform="translate(48.70 341.88) rotate(-44)"><path d="M-8.2 0 L-5.6 -2 H4.2 V2 H-5.6 Z" fill="#8a96a3" stroke="#1a1a1a" stroke-width="1.45" stroke-linejoin="round"/><path d="M-8.4 0 L-6.6 -1 V1 Z" fill="#222"/><rect x="4.6" y="-2.2" width="3.4" height="4.4" rx="0.6" fill="#222"/></g></svg>
<svg style="left:0;top:0" width="1" height="1"><circle cx="62.70" cy="338.98" r="4.1" fill="none" stroke="#222" stroke-width="1.35"/><path d="M65.60 341.98 L69.70 346.28" stroke="#222" stroke-width="2" stroke-linecap="round"/></svg>
<div class="t" style="top:336.12px;line-height:11.52px;font-size:9.60px;left:101.00px;color:#222;-webkit-text-stroke:0.05px #222">Cliente 950</div>
<div class="t" style="top:335.88px;line-height:12.00px;font-size:10.00px;left:166.00px;color:#111;-webkit-text-stroke:0.05px #111;transform:scaleX(0.93);transform-origin:0 50%">PAGO DE PEAJES</div>
<div class="t" style="top:335.84px;line-height:12.48px;font-size:10.40px;left:-98.70px;width:1200px;text-align:center;color:#111;">01-04-2025</div>
<div class="t" style="top:335.84px;line-height:12.48px;font-size:10.40px;left:-23.30px;width:1200px;text-align:center;color:#111;">Banco Mercantil</div>
<div class="t" style="top:336.08px;line-height:11.40px;font-size:9.50px;left:50.00px;width:1200px;text-align:center;color:#222;-webkit-text-stroke:0.12px #222">75250</div>
<div class="t" style="top:335.81px;line-height:12.72px;font-size:10.60px;left:-463.50px;width:1200px;text-align:right;color:#111;">-60,00</div>
<div class="t" style="top:335.52px;line-height:12.72px;font-size:10.60px;left:-325.80px;width:1200px;text-align:right;color:#111;">47.413,63</div>
<div class="r" style="left:900.30px;top:335.78px;width:21.00px;height:11.00px;background:#fff;border:1px solid #4d90cc;border-radius:6px"></div>
<div class="r" style="left:902.10px;top:337.28px;width:8.00px;height:8.00px;background:#3d85c6;border-radius:50%"></div>
<svg style="left:0;top:0" width="1" height="1"><path d="M932.20 335.41 L939.10 346.80 L925.30 346.80 Z" fill="none" stroke="#111" stroke-width="1.35" stroke-linejoin="miter"/><rect x="931.50" y="338.68" width="1.4" height="4" fill="#111"/><rect x="931.50" y="343.68" width="1.4" height="1.3" fill="#111"/></svg>
<div class="r" style="left:3.00px;top:351.95px;width:952.00px;height:21.35px;background:#e6f2fb;"></div>
<div class="r" style="left:3.00px;top:351.35px;width:952.00px;height:1.20px;border-top:1.2px dotted #59636d"></div>
<div class="t" style="top:354.48px;line-height:13.80px;font-size:11.50px;left:12.60px;color:#2b2b2b;letter-spacing:-0.38px;-webkit-text-stroke:0.15px #2b2b2b;transform:skewX(-8deg)">6604</div>
<div class="t" style="top:357.47px;line-height:11.52px;font-size:9.60px;left:101.00px;color:#222;-webkit-text-stroke:0.05px #222">Cliente 950</div>
<div class="t" style="top:357.23px;line-height:12.00px;font-size:10.00px;left:166.00px;color:#111;-webkit-text-stroke:0.05px #111;transform:scaleX(0.93);transform-origin:0 50%">**--COMMAN de 75250</div>
<div class="t" style="top:357.19px;line-height:12.48px;font-size:10.40px;left:-98.70px;width:1200px;text-align:center;color:#111;">01-04-2025</div>
<div class="t" style="top:357.19px;line-height:12.48px;font-size:10.40px;left:-23.30px;width:1200px;text-align:center;color:#111;">Banco Mercantil</div>
<div class="t" style="top:357.43px;line-height:11.40px;font-size:9.50px;left:50.00px;width:1200px;text-align:center;color:#222;-webkit-text-stroke:0.12px #222">75250</div>
<div class="t" style="top:357.17px;line-height:12.72px;font-size:10.60px;left:-463.50px;width:1200px;text-align:right;color:#111;">-0,13</div>
<div class="t" style="top:356.87px;line-height:12.72px;font-size:10.60px;left:-325.80px;width:1200px;text-align:right;color:#111;">47.413,50</div>
<div class="r" style="left:900.30px;top:357.13px;width:21.00px;height:11.00px;background:#fff;border:1px solid #4d90cc;border-radius:6px"></div>
<div class="r" style="left:902.10px;top:358.63px;width:8.00px;height:8.00px;background:#3d85c6;border-radius:50%"></div>
<svg style="left:0;top:0" width="1" height="1"><circle cx="932.30" cy="362.63" r="6.60" fill="none" stroke="#111" stroke-width="1.3"/><rect x="931.55" y="361.43" width="1.5" height="5" fill="#111"/><circle cx="932.30" cy="359.23" r="0.9" fill="#111"/></svg>
<div class="r" style="left:3.00px;top:373.30px;width:952.00px;height:21.35px;background:#c6e0f5;"></div>
<div class="r" style="left:3.00px;top:372.70px;width:952.00px;height:1.20px;border-top:1.2px dotted #59636d"></div>
<div class="t" style="top:375.83px;line-height:13.80px;font-size:11.50px;left:12.60px;color:#2b2b2b;letter-spacing:-0.38px;-webkit-text-stroke:0.15px #2b2b2b;transform:skewX(-8deg)">6605</div>
<svg style="left:0;top:0" width="1" height="1"><g transform="translate(48.70 384.58) rotate(-44)"><path d="M-8.2 0 L-5.6 -2 H4.2 V2 H-5.6 Z" fill="#8a96a3" stroke="#1a1a1a" stroke-width="1.45" stroke-linejoin="round"/><path d="M-8.4 0 L-6.6 -1 V1 Z" fill="#222"/><rect x="4.6" y="-2.2" width="3.4" height="4.4" rx="0.6" fill="#222"/></g></svg>
<svg style="left:0;top:0" width="1" height="1"><circle cx="62.70" cy="381.68" r="4.1" fill="none" stroke="#222" stroke-width="1.35"/><path d="M65.60 384.68 L69.70 388.98" stroke="#222" stroke-width="2" stroke-linecap="round"/></svg>
<div class="t" style="top:378.82px;line-height:11.52px;font-size:9.60px;left:101.00px;color:#222;-webkit-text-stroke:0.05px #222">Cliente 922</div>
<div class="t" style="top:378.58px;line-height:12.00px;font-size:10.00px;left:166.00px;color:#111;-webkit-text-stroke:0.05px #111;transform:scaleX(0.93);transform-origin:0 50%">**--DIFERENCIA COMBUSTIBLE DE MARZO 2025</div>
<div class="t" style="top:378.54px;line-height:12.48px;font-size:10.40px;left:-98.70px;width:1200px;text-align:center;color:#111;">01-04-2025</div>
<div class="t" style="top:378.54px;line-height:12.48px;font-size:10.40px;left:-23.30px;width:1200px;text-align:center;color:#111;">Banco Mercantil</div>
<div class="t" style="top:378.78px;line-height:11.40px;font-size:9.50px;left:50.00px;width:1200px;text-align:center;color:#222;-webkit-text-stroke:0.12px #222">29950</div>
<div class="t" style="top:378.51px;line-height:12.72px;font-size:10.60px;left:-463.50px;width:1200px;text-align:right;color:#111;">-3.266,87</div>
<div class="t" style="top:378.22px;line-height:12.72px;font-size:10.60px;left:-325.80px;width:1200px;text-align:right;color:#111;">44.146,63</div>
<div class="r" style="left:900.30px;top:378.48px;width:21.00px;height:11.00px;background:#fff;border:1px solid #4d90cc;border-radius:6px"></div>
<div class="r" style="left:902.10px;top:379.98px;width:8.00px;height:8.00px;background:#3d85c6;border-radius:50%"></div>
<svg style="left:0;top:0" width="1" height="1"><path d="M932.20 378.11 L939.10 389.50 L925.30 389.50 Z" fill="none" stroke="#111" stroke-width="1.35" stroke-linejoin="miter"/><rect x="931.50" y="381.38" width="1.4" height="4" fill="#111"/><rect x="931.50" y="386.38" width="1.4" height="1.3" fill="#111"/></svg>
<div class="r" style="left:3.00px;top:394.65px;width:952.00px;height:21.35px;background:#e6f2fb;"></div>
<div class="r" style="left:3.00px;top:394.05px;width:952.00px;height:1.20px;border-top:1.2px dotted #59636d"></div>
<div class="t" style="top:397.18px;line-height:13.80px;font-size:11.50px;left:12.60px;color:#2b2b2b;letter-spacing:-0.38px;-webkit-text-stroke:0.15px #2b2b2b;transform:skewX(-8deg)">6606</div>
<div class="t" style="top:400.17px;line-height:11.52px;font-size:9.60px;left:101.00px;color:#222;-webkit-text-stroke:0.05px #222">Cliente 922</div>
<div class="t" style="top:399.93px;line-height:12.00px;font-size:10.00px;left:166.00px;color:#111;-webkit-text-stroke:0.05px #111;transform:scaleX(0.93);transform-origin:0 50%">**--COMMAN de 29950</div>
<div class="t" style="top:399.89px;line-height:12.48px;font-size:10.40px;left:-98.70px;width:1200px;text-align:center;color:#111;">01-04-2025</div>
<div class="t" style="top:399.89px;line-height:12.48px;font-size:10.40px;left:-23.30px;width:1200px;text-align:center;color:#111;">Banco Mercantil</div>
<div class="t" style="top:400.13px;line-height:11.40px;font-size:9.50px;left:50.00px;width:1200px;text-align:center;color:#222;-webkit-text-stroke:0.12px #222">29950</div>
<div class="t" style="top:399.87px;line-height:12.72px;font-size:10.60px;left:-463.50px;width:1200px;text-align:right;color:#111;">-0,32</div>
<div class="t" style="top:399.57px;line-height:12.72px;font-size:10.60px;left:-325.80px;width:1200px;text-align:right;color:#111;">44.146,31</div>
<div class="r" style="left:900.30px;top:399.83px;width:21.00px;height:11.00px;background:#fff;border:1px solid #4d90cc;border-radius:6px"></div>
<div class="r" style="left:902.10px;top:401.33px;width:8.00px;height:8.00px;background:#3d85c6;border-radius:50%"></div>
<svg style="left:0;top:0" width="1" height="1"><circle cx="932.30" cy="405.33" r="6.60" fill="none" stroke="#111" stroke-width="1.3"/><rect x="931.55" y="404.13" width="1.5" height="5" fill="#111"/><circle cx="932.30" cy="401.93" r="0.9" fill="#111"/></svg>
<div class="r" style="left:3.00px;top:416.00px;width:952.00px;height:21.35px;background:#c6e0f5;"></div>
<div class="r" style="left:3.00px;top:415.40px;width:952.00px;height:1.20px;border-top:1.2px dotted #59636d"></div>
<div class="t" style="top:418.53px;line-height:13.80px;font-size:11.50px;left:12.60px;color:#2b2b2b;letter-spacing:-0.38px;-webkit-text-stroke:0.15px #2b2b2b;transform:skewX(-8deg)">6608</div>
<svg style="left:0;top:0" width="1" height="1"><g transform="translate(48.70 427.28) rotate(-44)"><path d="M-8.2 0 L-5.6 -2 H4.2 V2 H-5.6 Z" fill="#8a96a3" stroke="#1a1a1a" stroke-width="1.45" stroke-linejoin="round"/><path d="M-8.4 0 L-6.6 -1 V1 Z" fill="#222"/><rect x="4.6" y="-2.2" width="3.4" height="4.4" rx="0.6" fill="#222"/></g></svg>
<svg style="left:0;top:0" width="1" height="1"><circle cx="62.70" cy="424.38" r="4.1" fill="none" stroke="#222" stroke-width="1.35"/><path d="M65.60 427.38 L69.70 431.68" stroke="#222" stroke-width="2" stroke-linecap="round"/></svg>
<div class="t" style="top:421.52px;line-height:11.52px;font-size:9.60px;left:101.00px;color:#222;-webkit-text-stroke:0.05px #222">Cliente 265</div>
<div class="t" style="top:421.28px;line-height:12.00px;font-size:10.00px;left:166.00px;color:#111;-webkit-text-stroke:0.05px #111;transform:scaleX(0.93);transform-origin:0 50%">PAGO DE IVA 2DA MARZO 2025</div>
<div class="t" style="top:421.24px;line-height:12.48px;font-size:10.40px;left:-98.70px;width:1200px;text-align:center;color:#111;">01-04-2025</div>
<div class="t" style="top:421.24px;line-height:12.48px;font-size:10.40px;left:-23.30px;width:1200px;text-align:center;color:#111;">Banco Mercantil</div>
<div class="t" style="top:421.48px;line-height:11.40px;font-size:9.50px;left:50.00px;width:1200px;text-align:center;color:#222;-webkit-text-stroke:0.12px #222">83739</div>
<div class="t" style="top:421.22px;line-height:12.72px;font-size:10.60px;left:-463.50px;width:1200px;text-align:right;color:#111;">-177.791,21</div>
<div class="t" style="top:420.92px;line-height:12.72px;font-size:10.60px;left:-325.80px;width:1200px;text-align:right;color:#111;">-133.644,90</div>
<div class="r" style="left:900.30px;top:421.18px;width:21.00px;height:11.00px;background:#fff;border:1px solid #4d90cc;border-radius:6px"></div>
<div class="r" style="left:902.10px;top:422.68px;width:8.00px;height:8.00px;background:#3d85c6;border-radius:50%"></div>
<svg style="left:0;top:0" width="1" height="1"><path d="M932.20 420.81 L939.10 432.20 L925.30 432.20 Z" fill="none" stroke="#111" stroke-width="1.35" stroke-linejoin="miter"/><rect x="931.50" y="424.08" width="1.4" height="4" fill="#111"/><rect x="931.50" y="429.08" width="1.4" height="1.3" fill="#111"/></svg>
<div class="r" style="left:3.00px;top:437.35px;width:952.00px;height:21.35px;background:#e6f2fb;"></div>
<div class="r" style="left:3.00px;top:436.75px;width:952.00px;height:1.20px;border-top:1.2px dotted #59636d"></div>
<div class="t" style="top:439.88px;line-height:13.80px;font-size:11.50px;left:12.60px;color:#2b2b2b;letter-spacing:-0.38px;-webkit-text-stroke:0.15px #2b2b2b;transform:skewX(-8deg)">6607</div>
<svg style="left:0;top:0" width="1" height="1"><g transform="translate(48.70 448.63) rotate(-44)"><path d="M-8.2 0 L-5.6 -2 H4.2 V2 H-5.6 Z" fill="#8a96a3" stroke="#1a1a1a" stroke-width="1.45" stroke-linejoin="round"/><path d="M-8.4 0 L-6.6 -1 V1 Z" fill="#222"/><rect x="4.6" y="-2.2" width="3.4" height="4.4" rx="0.6" fill="#222"/></g></svg>
<svg style="left:0;top:0" width="1" height="1"><circle cx="62.70" cy="445.73" r="4.1" fill="none" stroke="#222" stroke-width="1.35"/><path d="M65.60 448.73 L69.70 453.03" stroke="#222" stroke-width="2" stroke-linecap="round"/></svg>
<div class="t" style="top:442.87px;line-height:11.52px;font-size:9.60px;left:101.00px;color:#222;-webkit-text-stroke:0.05px #222">Cliente 586</div>
<div class="t" style="top:442.63px;line-height:12.00px;font-size:10.00px;left:166.00px;color:#111;-webkit-text-stroke:0.05px #111;transform:scaleX(0.93);transform-origin:0 50%">PREST DE INVICTUS</div>
<div class="t" style="top:442.59px;line-height:12.48px;font-size:10.40px;left:-98.70px;width:1200px;text-align:center;color:#111;">01-04-2025</div>
<div class="t" style="top:442.59px;line-height:12.48px;font-size:10.40px;left:-23.30px;width:1200px;text-align:center;color:#111;">Banco Mercantil</div>
<div class="t" style="top:442.83px;line-height:11.40px;font-size:9.50px;left:50.00px;width:1200px;text-align:center;color:#222;-webkit-text-stroke:0.12px #222">85665</div>
<div class="t" style="top:442.56px;line-height:12.72px;font-size:10.60px;left:-394.00px;width:1200px;text-align:right;color:#111;">200.000,00</div>
<div class="t" style="top:442.27px;line-height:12.72px;font-size:10.60px;left:-325.80px;width:1200px;text-align:right;color:#111;">66.355,10</div>
<div class="r" style="left:900.30px;top:442.53px;width:21.00px;height:11.00px;background:#fff;border:1px solid #4d90cc;border-radius:6px"></div>
<div class="r" style="left:902.10px;top:444.03px;width:8.00px;height:8.00px;background:#3d85c6;border-radius:50%"></div>
<svg style="left:0;top:0" width="1" height="1"><circle cx="932.30" cy="448.03" r="6.60" fill="none" stroke="#111" stroke-width="1.3"/><rect x="931.55" y="446.83" width="1.5" height="5" fill="#111"/><circle cx="932.30" cy="444.63" r="0.9" fill="#111"/></svg>
<div class="r" style="left:3.00px;top:458.70px;width:952.00px;height:21.30px;background:#c6e0f5;border-radius:0 0 0 6px"></div>
<div class="r" style="left:3.00px;top:458.10px;width:952.00px;height:1.20px;border-top:1.2px dotted #59636d"></div>
<div class="t" style="top:461.23px;line-height:13.80px;font-size:11.50px;left:12.60px;color:#2b2b2b;letter-spacing:-0.38px;-webkit-text-stroke:0.15px #2b2b2b;transform:skewX(-8deg)">6609</div>
<svg style="left:0;top:0" width="1" height="1"><g transform="translate(48.70 469.98) rotate(-44)"><path d="M-8.2 0 L-5.6 -2 H4.2 V2 H-5.6 Z" fill="#8a96a3" stroke="#1a1a1a" stroke-width="1.45" stroke-linejoin="round"/><path d="M-8.4 0 L-6.6 -1 V1 Z" fill="#222"/><rect x="4.6" y="-2.2" width="3.4" height="4.4" rx="0.6" fill="#222"/></g></svg>
<svg style="left:0;top:0" width="1" height="1"><circle cx="62.70" cy="467.08" r="4.1" fill="none" stroke="#222" stroke-width="1.35"/><path d="M65.60 470.08 L69.70 474.38" stroke="#222" stroke-width="2" stroke-linecap="round"/></svg>
<div class="t" style="top:464.22px;line-height:11.52px;font-size:9.60px;left:101.00px;color:#222;-webkit-text-stroke:0.05px #222">Cliente 1</div>
<div class="t" style="top:463.98px;line-height:12.00px;font-size:10.00px;left:166.00px;color:#111;-webkit-text-stroke:0.05px #111;transform:scaleX(0.93);transform-origin:0 50%">PAGO ANTICIPADO 2DA MARZO 2025</div>
<div class="t" style="top:463.94px;line-height:12.48px;font-size:10.40px;left:-98.70px;width:1200px;text-align:center;color:#111;">01-04-2025</div>
<div class="t" style="top:463.94px;line-height:12.48px;font-size:10.40px;left:-23.30px;width:1200px;text-align:center;color:#111;">Banco Mercantil</div>
<div class="t" style="top:464.18px;line-height:11.40px;font-size:9.50px;left:50.00px;width:1200px;text-align:center;color:#222;-webkit-text-stroke:0.12px #222">495387</div>
<div class="t" style="top:463.92px;line-height:12.72px;font-size:10.60px;left:-463.50px;width:1200px;text-align:right;color:#111;">-22.555,04</div>
<div class="t" style="top:463.62px;line-height:12.72px;font-size:10.60px;left:-325.80px;width:1200px;text-align:right;color:#111;">43.800,06</div>
<div class="r" style="left:900.30px;top:463.88px;width:21.00px;height:11.00px;background:#fff;border:1px solid #4d90cc;border-radius:6px"></div>
<div class="r" style="left:902.10px;top:465.38px;width:8.00px;height:8.00px;background:#3d85c6;border-radius:50%"></div>
<svg style="left:0;top:0" width="1" height="1"><path d="M932.20 463.51 L939.10 474.90 L925.30 474.90 Z" fill="none" stroke="#111" stroke-width="1.35" stroke-linejoin="miter"/><rect x="931.50" y="466.78" width="1.4" height="4" fill="#111"/><rect x="931.50" y="471.78" width="1.4" height="1.3" fill="#111"/></svg>
</div></div></body></html>
